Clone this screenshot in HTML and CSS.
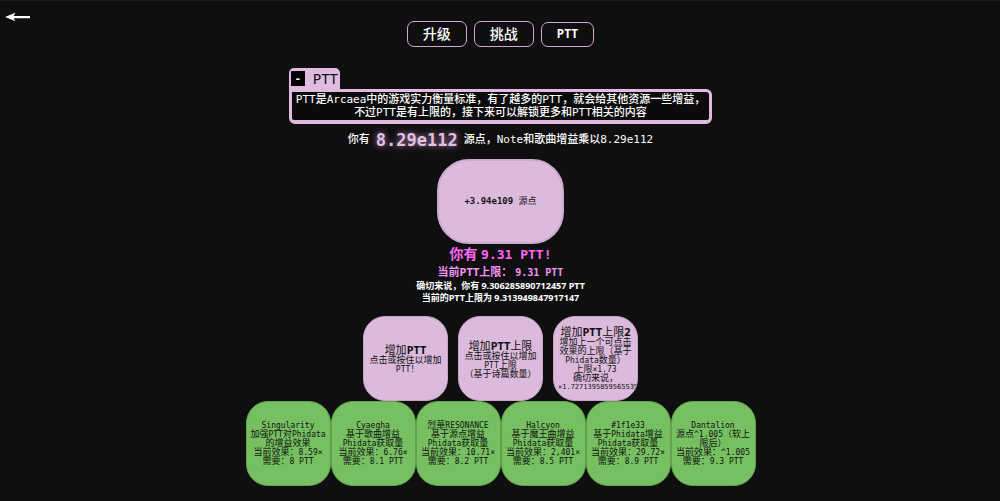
FILE: index.html
```html
<!DOCTYPE html>
<html lang="zh-CN">
<head>
<meta charset="utf-8">
<title>PTT</title>
<link rel="stylesheet" href="styles.css">
</head>
<body>
<button class="back" aria-label="返回">
<svg width="25" height="10" viewBox="0 0 25 10"><path d="M0 5 10.500 0.800 8.500 4H25V6.200H8.500L10.500 9.200Z" fill="#fff"/></svg>
</button>
<main class="page">
<nav class="tabs">
<button class="tab">升级</button>
<button class="tab">挑战</button>
<button class="tab tab-latin">PTT</button>
</nav>
<section class="panel">
<header class="panel-head"><button class="fold" aria-label="收起">-</button><h1 class="panel-title">PTT</h1></header>
<p class="panel-body">PTT是Arcaea中的游戏实力衡量标准，有了越多的PTT，就会给其他资源一些增益，<br>不过PTT是有上限的，接下来可以解锁更多和PTT相关的内容</p>
</section>
<p class="status">你有 <strong class="points">8.29e112</strong> 源点，Note和歌曲增益乘以8.29e112</p>
<button class="gain"><b>+3.94e109</b> 源点</button>
<section class="summary">
<p class="have">你有 <span class="have-value">9.31 PTT!</span></p>
<p class="limit">当前PTT上限： <span class="limit-value">9.31 PTT</span></p>
<p class="exact">确切来说，你有 9.306285890712457 PTT</p>
<p class="exact">当前的PTT上限为 9.313949847917147</p>
</section>
<section class="upgrades">
<button class="tile pink"><span class="name">增加<b>PTT</b></span>点击或按住以增加<br><span class="en">PTT!</span></button>
<button class="tile pink"><span class="name">增加<b>PTT</b>上限</span>点击或按住以增加<br><span class="en">PTT</span>上限<br>（基于诗篇数量）</button>
<button class="tile pink"><span class="name">增加<b>PTT</b>上限<b>2</b></span>增加上一个可点击<br>效果的上限（基于<br><span class="en">Phidata</span>数量）<br>上限<span class="en">×1.73</span><br>确切来说，<br><span class="long-value">×1.7271395859565535</span></button>
</section>
<section class="effects">
<button class="tile green"><span class="en">Singularity</span><br>加强<span class="en">PTT</span>对<span class="en">Phidata</span><br>的增益效果<br>当前效果：<span class="en">8.59×</span><br>需要：<span class="en">8 PTT</span></button>
<button class="tile green"><span class="en">Cyaegha</span><br>基于歌曲增益<br><span class="en">Phidata</span>获取量<br>当前效果：<span class="en">6.76×</span><br>需要：<span class="en">8.1 PTT</span></button>
<button class="tile green">烈華<span class="en">RESONANCE</span><br>基于源点增益<br><span class="en">Phidata</span>获取量<br>当前效果：<span class="en">10.71×</span><br>需要：<span class="en">8.2 PTT</span></button>
<button class="tile green"><span class="en">Halcyon</span><br>基于魔王曲增益<br><span class="en">Phidata</span>获取量<br>当前效果：<span class="en">2,401×</span><br>需要：<span class="en">8.5 PTT</span></button>
<button class="tile green"><span class="en">#1f1e33</span><br>基于<span class="en">Phidata</span>增益<br><span class="en">Phidata</span>获取量<br>当前效果：<span class="en">29.72×</span><br>需要：<span class="en">8.9 PTT</span></button>
<button class="tile green"><span class="en">Dantalion</span><br>源点<span class="en">^1.005</span>（软上<br>限后）<br>当前效果：<span class="en">^1.005</span><br>需要：<span class="en">9.3 PTT</span></button>
</section>
</main>
</body>
</html>
```
FILE: styles.css
```css
* { box-sizing: border-box; margin: 0; }
body {
  background: #0f0f0f;
  color: #fff;
  border-top: 1px solid #1d1d1d;
  font-family: "DejaVu Sans Mono", "Noto Sans CJK SC", monospace;
  font-size: 11px;
  line-height: 13px;
}
button { font: inherit; color: inherit; background: none; border: 0; padding: 0; cursor: pointer; }
.back { position: absolute; left: 5px; top: 12px; display: flex; }
.page { display: flex; flex-direction: column; align-items: center; padding: 20px 0 0 1px; }
.tabs { display: flex; align-items: center; gap: 7px; }
.tab {
  border: 1px solid #cfa9d0;
  border-radius: 7px;
  padding: 3px 15px;
  font-size: 14px;
  font-weight: 500;
  line-height: 18px;
}
.tab-latin { font-size: 12px; line-height: 17px; font-weight: bold; }
.panel { margin-top: 21px; }
.panel-head {
  display: flex;
  align-items: center;
  width: max-content;
  height: 21px;
  padding: 0 2px;
  gap: 8px;
  background: #dfbcdf;
  border-radius: 5px 5px 0 0;
  color: #111;
}
.fold { width: 14px; height: 15px; background: #000; color: #fff; font-weight: bold; }
.panel-title { font-size: 14px; font-weight: normal; line-height: 20px; }
.panel-body {
  border: 3px solid #dfbcdf;
  border-bottom-width: 4px;
  border-radius: 0 6px 6px 6px;
  padding: 1px 4px;
  text-align: center;
  background: #0b0b0b;
  font-weight: 500;
}
.status { display: flex; align-items: center; gap: 6px; margin-top: 5px; line-height: 22px; font-weight: 500; }
.points {
  font-size: 17px;
  color: #e3bfe5;
  text-shadow: 0 0 6px #b98abb;
}
.gain {
  width: 127px;
  height: 85px;
  margin-top: 8px;
  border: 2px solid #cbaacb;
  border-radius: 32px;
  background: #dcbadc;
  color: #111;
  font-size: 9px;
}
.summary { text-align: center; font-family: "Noto Sans", "Noto Sans CJK SC", sans-serif; font-weight: bold; }
.have { font-size: 14px; line-height: 20px; color: #ff67f5; }
.have-value { font-family: "DejaVu Sans Mono", monospace; font-size: 13px; }
.limit { font-size: 11px; line-height: 14px; color: #f593f5; }
.limit-value { font-family: "DejaVu Sans Mono", monospace; font-size: 10px; }
.exact { font-size: 9px; line-height: 12px; }
.upgrades { display: flex; gap: 10px; margin-top: 12px; }
.effects { display: flex; }
.tile {
  width: 85px;
  height: 85px;
  border-radius: 22px;
  color: #111;
  font-size: 9px;
  line-height: 9px;
  white-space: nowrap;
  display: block;
  overflow: hidden;
}
.pink { background: #dcbadc; border: 1px solid #c5a4c5; }
.green { background: #77c061; border: 1px solid #62a24f; }
.name { display: block; font-family: "Noto Sans", "Noto Sans CJK SC", sans-serif; font-size: 11px; line-height: 13px; }
.en { font-size: 8px; line-height: 1; }
.long-value { display: block; padding-left: 4px; text-align: left; font-size: 7px; }
```
